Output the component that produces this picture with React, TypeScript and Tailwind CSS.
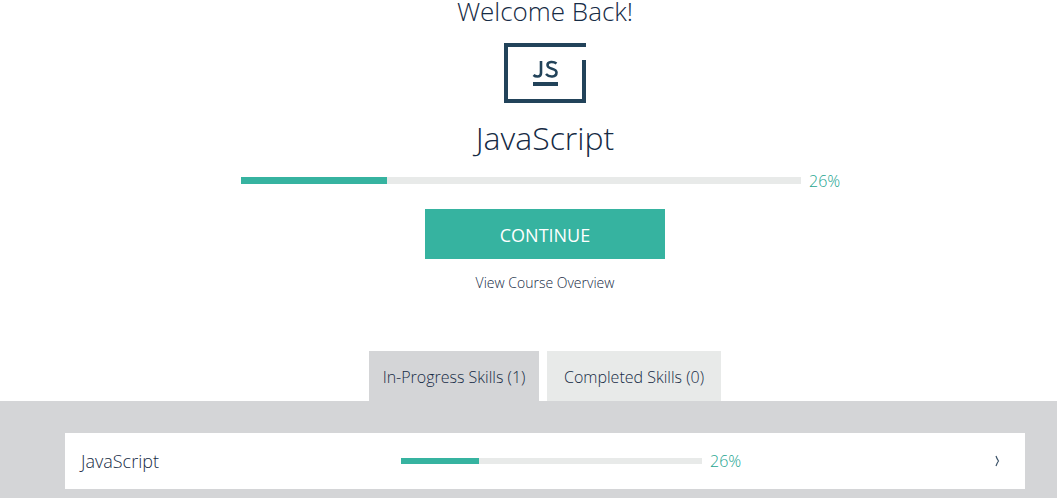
const skills = [{ name: 'JavaScript', percent: 26 }]

const tabs = [
  { label: 'In-Progress Skills (1)', style: 'w-[170px] bg-[#d4d5d7]', active: true },
  { label: 'Completed Skills (0)', style: 'w-[174px] bg-[#e8eae9]', active: false },
]

function ProgressBar({ percent, className, label }: { percent: number; className: string; label: string }) {
  return (
    <div
      role="progressbar"
      aria-label={label}
      aria-valuenow={percent}
      aria-valuemin={0}
      aria-valuemax={100}
      className={`bg-[#e8eae9] ${className}`}
    >
      <div className="h-full bg-[#36b3a0]" style={{ width: `${percent}%` }} />
    </div>
  )
}

function CourseLogo() {
  return (
    <svg width="82" height="60" viewBox="0 0 82 60" fill="none" stroke="#22435a" strokeWidth="4" aria-hidden="true">
      <path d="M82 2H2V58H80V17" />
      <path d="M29 41H54" />
      {/* J and S strokes */}
      <path d="M37 18V30Q37 33.500 33.500 33.500Q31 33.500 29.500 32" strokeWidth="2.6" />
      <path
        d="M52.500 20.500C50 18.500 43.500 18 43.500 22C43.500 27 52.500 24.500 52.500 29.500C52.500 34.500 45 34.500 42 31"
        strokeWidth="2.6"
      />
    </svg>
  )
}

export default function App() {
  return (
    <main className="min-h-screen flex flex-col bg-white font-['Open_Sans',sans-serif] font-light text-[#162b45]">
      <section className="pl-[65px] pr-8 flex flex-col items-center">
        <h1 className="text-[26px] leading-[23px]">Welcome Back!</h1>
        <div className="mt-5">
          <CourseLogo />
        </div>
        <h2 className="mt-[15px] text-[32px] leading-10">JavaScript</h2>

        <div className="mt-3 w-full max-w-[608px] flex items-center gap-2">
          <ProgressBar percent={26} label="JavaScript progress" className="h-[7px] flex-1" />
          <span className="w-10 pt-px text-base leading-5 text-[#24a590]">26%</span>
        </div>

        <button type="button" className="mt-[18px] w-60 h-[50px] pt-[2px] bg-[#36b3a0] text-white text-lg font-normal">
          CONTINUE
        </button>
        <a href="#overview" className="mt-[14px] text-sm leading-5">
          View Course Overview
        </a>

        <div role="tablist" className="mt-[58px] flex gap-2">
          {tabs.map((t) => (
            <button
              key={t.label}
              type="button"
              role="tab"
              aria-selected={t.active}
              className={`h-[50px] pt-[2px] text-base whitespace-nowrap ${t.style}`}
            >
              {t.label}
            </button>
          ))}
        </div>
      </section>

      <section className="flex-1 bg-[#d4d5d7] pl-[65px] pr-8 pt-8 pb-[9px]">
        {skills.map((s) => (
          <a key={s.name} href="#javascript" className="h-14 px-4 bg-white flex items-center">
            <span className="w-80 text-lg">{s.name}</span>
            <ProgressBar percent={s.percent} label={`${s.name} skill progress`} className="w-[301px] h-[6px]" />
            <span className="ml-2 text-base text-[#24a590]">{s.percent}%</span>
            <svg className="ml-auto mr-2" width="7" height="12" viewBox="0 0 7 12" fill="none" stroke="#3b5268" strokeWidth="1.2" aria-hidden="true">
              <path d="M2 1Q3 4 4.500 6Q3 8 2 11" />
            </svg>
          </a>
        ))}
      </section>
    </main>
  )
}
